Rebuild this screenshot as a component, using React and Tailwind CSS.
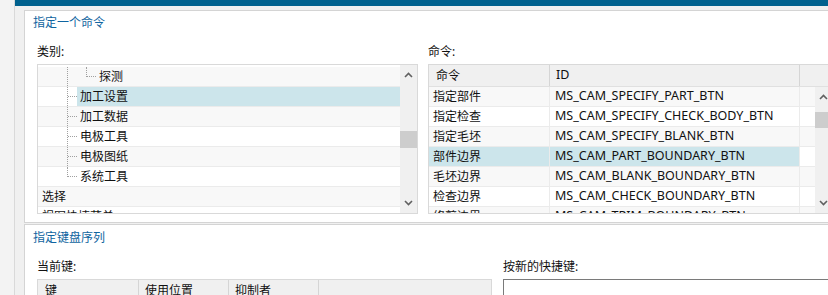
import React from "react";

const FONT = { fontFamily: '"Noto Sans", "Noto Sans CJK SC", sans-serif' };

function Chevron({ up }) {
  return (
    <svg width="9" height="6" viewBox="0 0 9 6">
      <path
        d={up ? "M1 5 L4.5 1.5 L8 5" : "M1 1 L4.5 4.5 L8 1"}
        fill="none"
        stroke="#606060"
        strokeWidth="1.6"
      />
    </svg>
  );
}

function ScrollBar({ thumbTop, thumbH }) {
  return (
    <div className="w-[17px] h-full bg-[#f0f0f0] flex flex-col shrink-0">
      <div className="h-[20px] flex items-center justify-center shrink-0">
        <Chevron up />
      </div>
      <div className="flex-1 min-h-0">
        <div className="bg-[#cdcdcd] w-full" style={{ marginTop: thumbTop, height: thumbH }} />
      </div>
      <div className="h-[20px] flex items-center justify-center shrink-0">
        <Chevron />
      </div>
    </div>
  );
}

const DOT = "border-dotted border-[#a0a0a0]";

function TreeRow({ idx, kind, text, selected }) {
  const bg = idx % 2 === 0 ? "bg-[#f8f8f8]" : "bg-white";
  return (
    <div className={`h-[20px] shrink-0 border-b border-[#ebebeb] flex ${bg}`}>
      {kind === "l2" && (
        <>
          <div className="w-[29px] shrink-0" />
          <div className={`w-[19px] h-full shrink-0 border-l ${DOT}`} />
          <div className={`w-[10px] h-[10px] shrink-0 border-l border-b ${DOT}`} />
          <div className="flex-1 h-full flex items-center pl-[3px]">{text}</div>
        </>
      )}
      {(kind === "l1" || kind === "l1last") && (
        <>
          <div className="w-[29px] shrink-0" />
          <div className={`w-[10px] h-full shrink-0 ${kind === "l1" ? `border-l ${DOT}` : ""}`}>
            <div className={`h-[10px] border-b ${DOT} ${kind === "l1last" ? "border-l" : ""}`} />
          </div>
          <div className={`flex-1 h-full flex items-center pl-[3px] ${selected ? "bg-[#cce5eb]" : ""}`}>
            {text}
          </div>
        </>
      )}
      {kind === "top" && <div className="flex-1 h-full flex items-center pl-[4px]">{text}</div>}
    </div>
  );
}

const treeRows = [
  { kind: "l2", text: "探测" },
  { kind: "l1", text: "加工设置", selected: true },
  { kind: "l1", text: "加工数据" },
  { kind: "l1", text: "电极工具" },
  { kind: "l1", text: "电极图纸" },
  { kind: "l1last", text: "系统工具" },
  { kind: "top", text: "选择" },
  { kind: "top", text: "视图快捷菜单" },
];

const cmdRows = [
  ["指定部件", "MS_CAM_SPECIFY_PART_BTN"],
  ["指定检查", "MS_CAM_SPECIFY_CHECK_BODY_BTN"],
  ["指定毛坯", "MS_CAM_SPECIFY_BLANK_BTN"],
  ["部件边界", "MS_CAM_PART_BOUNDARY_BTN", true],
  ["毛坯边界", "MS_CAM_BLANK_BOUNDARY_BTN"],
  ["检查边界", "MS_CAM_CHECK_BOUNDARY_BTN"],
  ["修剪边界", "MS_CAM_TRIM_BOUNDARY_BTN"],
];

export default function App() {
  return (
    <div
      className="w-[828px] h-[295px] overflow-hidden flex bg-[#f0f0f0] text-[12px] text-[#111]"
      style={FONT}
    >
      <div className="w-[15px] h-full shrink-0 bg-[#f3f3f3] border-r border-[#d9d9d9]" />
      <div className="flex-1 min-w-0 flex flex-col">
        <div className="h-[6px] bg-[#00618e] shrink-0" />
        <div className="pl-[9px] pt-[4px] flex flex-col">
          {/* Panel 1 */}
          <div className="w-[820px] h-[213px] shrink-0 border border-[#d4d4d4] bg-white pt-[4px] pl-[8px] flex flex-col">
            <div className="h-[16px] leading-[16px] text-[#0f64a0] text-[12px]">指定一个命令</div>
            <div className="flex pl-[4px] mt-[13px] gap-[10px]">
              {/* Left: category */}
              <div className="w-[381px] shrink-0 flex flex-col">
                <div className="h-[16px] leading-[16px]">类别:</div>
                <div className="mt-[4px] h-[150px] border border-[#d9d9d9] flex overflow-hidden">
                  <div className="flex-1 min-w-0 flex flex-col overflow-hidden pt-[2px]">
                    {treeRows.map((r, i) => (
                      <TreeRow key={i} idx={i} {...r} />
                    ))}
                  </div>
                  <ScrollBar thumbTop={46} thumbH={17} />
                </div>
              </div>
              {/* Right: commands */}
              <div className="w-[405px] shrink-0 flex flex-col">
                <div className="h-[16px] leading-[16px]">命令:</div>
                <div className="mt-[4px] h-[150px] border border-[#d9d9d9] flex flex-col overflow-hidden">
                  <div className="h-[22px] shrink-0 flex bg-[#f0f0f0] border-b border-[#e0e0e0]">
                    <div className="w-[121px] border-r border-[#d5d5d5] flex items-center pl-[7px]">命令</div>
                    <div className="w-[250px] border-r border-[#d5d5d5] flex items-center pl-[6px] text-[12.5px]">ID</div>
                    <div className="flex-1" />
                  </div>
                  <div className="flex-1 min-h-0 flex">
                    <div className="flex-1 min-w-0 flex flex-col overflow-hidden">
                      {cmdRows.map(([a, b, sel], i) => {
                        const bg = i % 2 === 0 ? "bg-[#f8f8f8]" : "bg-white";
                        return (
                          <div key={i} className={`h-[20px] shrink-0 flex border-b border-[#ebebeb] ${bg}`}>
                            <div
                              className={`w-[121px] shrink-0 border-r border-[#ebebeb] flex items-center pl-[4px] ${sel ? "bg-[#cce5eb]" : ""}`}
                            >
                              {a}
                            </div>
                            <div
                              className={`w-[250px] shrink-0 border-r border-[#ebebeb] flex items-center pl-[5px] text-[12.5px] ${sel ? "bg-[#cce5eb]" : ""}`}
                            >
                              {b}
                            </div>
                            <div className="flex-1" />
                          </div>
                        );
                      })}
                    </div>
                    <ScrollBar thumbTop={5} thumbH={16} />
                  </div>
                </div>
              </div>
            </div>
          </div>
          {/* Panel 2 */}
          <div className="mt-[1px] w-[820px] h-[100px] shrink-0 border border-[#d4d4d4] bg-white pt-[5px] pl-[8px] flex flex-col">
            <div className="h-[16px] leading-[16px] text-[#0f64a0]">指定键盘序列</div>
            <div className="flex pl-[4px] mt-[13px] gap-[11px]">
              <div className="w-[455px] shrink-0 flex flex-col">
                <div className="h-[16px] leading-[16px]">当前键:</div>
                <div className="mt-[4px] h-[40px] border border-[#d9d9d9] flex flex-col">
                  <div className="h-[22px] flex bg-[#f0f0f0]">
                    <div className="w-[101px] border-r border-[#d5d5d5] flex items-center pl-[7px]">键</div>
                    <div className="w-[90px] border-r border-[#d5d5d5] flex items-center pl-[6px]">使用位置</div>
                    <div className="w-[90px] border-r border-[#d5d5d5] flex items-center pl-[6px]">抑制者</div>
                    <div className="flex-1" />
                  </div>
                </div>
              </div>
              <div className="w-[340px] shrink-0 flex flex-col">
                <div className="h-[16px] leading-[16px]">按新的快捷键:</div>
                <div className="mt-[4px] h-[40px] border border-[#7a7a7a] bg-white" />
              </div>
            </div>
          </div>
        </div>
      </div>
    </div>
  );
}
